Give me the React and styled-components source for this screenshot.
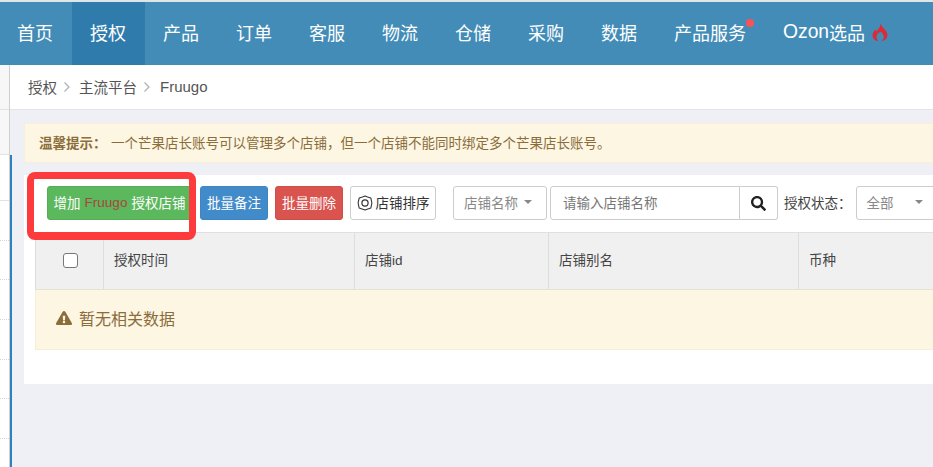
import React from "react";
import styled, { createGlobalStyle } from "styled-components";
import { FaExclamationTriangle, FaSearch } from "react-icons/fa";

const Global = createGlobalStyle`
  html, body { margin: 0; padding: 0; width: 933px; height: 467px; overflow: hidden; background: #eef0f5; }
  * { box-sizing: border-box; }
  body { font-family: "Liberation Sans", "Noto Sans CJK SC", sans-serif; color: #333; }
`;

const Page = styled.div`
  width: 933px; height: 467px; display: flex; flex-direction: column; overflow: hidden; position: relative;
`;
const TopStrip = styled.div`height: 2px; flex: none; background: #dfe6ea;`;
const Nav = styled.nav`
  height: 63px; flex: none; display: flex; background: #438cb8; margin-left: -1.5px;
`;
const NavItem = styled.div`
  position: relative; height: 100%; display: flex; align-items: center; flex: none;
  padding: 0 18.5px 3px; font-size: 18px; color: #fff; white-space: nowrap;
  background: ${p => (p.$active ? "#2f7cac" : "transparent")};
`;
const OzonWord = styled.span`font-size: 19.3px;`;
const Dot = styled.span`
  position: absolute; top: 17px; right: 11px; width: 8px; height: 8px; border-radius: 50%; background: #f9505a;
`;
const Fire = styled.svg`width: 16px; height: 18px; margin-left: 7px; flex: none;`;

const Body = styled.div`flex: 1; display: flex; min-height: 0;`;
const Sidebar = styled.aside`
  width: 10px; flex: none; background: #fff; border-right: 1px solid #cfcfcf; display: flex; flex-direction: column;
`;
const SideHead = styled.div`
  height: ${p => p.$h}px; flex: none; background: ${p => p.$bg || "#f7f7f7"}; border-bottom: 1px solid #e2e2e2;
`;
const SideRow = styled.div`height: 39.7px; flex: none; border-bottom: 1px dotted #d4d4d4;`;

const Main = styled.main`flex: 1; min-width: 0; display: flex; flex-direction: column;`;
const Crumbs = styled.div`
  height: 45px; flex: none; background: #fff; border-bottom: 1px solid #e3e4e6; display: flex; align-items: center;
  padding: 0 0 1px 18px; font-size: 14.5px; color: #555;
`;
const CrumbLatin = styled.span`font-size: 15px; margin-left: 1px;`;
const Sep = styled.svg`width: 8px; height: 12px; margin: 0 8px 0 6px; flex: none;`;

const Content = styled.div`flex: 1; position: relative; padding: 13px 0 0 14px; min-height: 0; overflow: hidden;`;
const BlueBar = styled.div`position: absolute; left: 0; top: 45px; bottom: 0; width: 2px; background: #2f80bf;`;

const Alert = styled.div`
  height: 40px; background: #fdf6e3; border: 1px solid #f8eedb; border-right: 0; display: flex; align-items: center;
  padding: 0 0 2px 14px; font-size: 13.5px; color: #8a6d3b; white-space: nowrap;
`;
const AlertTitle = styled.b`font-weight: 700; margin-right: 4.5px;`;

const Panel = styled.section`
  margin-top: 12px; height: 209px; background: #fff; padding: 11px 0 0 11px; width: 920px;
`;
const Toolbar = styled.div`
  height: 34px; display: flex; align-items: stretch; margin-left: 12px; white-space: nowrap; font-size: 13.5px;
`;
const Btn = styled.button`
  height: 34px; padding: 0 0 2px; width: ${p => p.$w}px; margin-left: ${p => p.$ml || 0}px; flex: none;
  background: ${p => p.$bg}; border: 1px solid ${p => p.$bd}; border-radius: 3px; color: ${p => p.$fg || "#fff"};
  font: inherit; display: flex; align-items: center; justify-content: center;
`;
const Brand = styled.span`color: #a94442; margin: 0 4px;`;
const SortIcon = styled.svg`width: 16px; height: 16px; margin: 2px 3px 0 0; flex: none;`;
const Select = styled.div`
  width: ${p => p.$w}px; height: 34px; margin-left: ${p => p.$ml}px; flex: none; border: 1px solid #ccc; border-radius: 3px;
  background: #fff; color: #888; display: flex; align-items: center; padding: 0 0 2px 10px;
`;
const Caret = styled.i`
  width: 0; height: 0; margin-left: ${p => p.$ml}px; border-left: 4px solid transparent; border-right: 4px solid transparent; border-top: 4px solid #888;
`;
const SearchInput = styled.div`
  width: 190px; height: 34px; margin-left: 3px; flex: none; border: 1px solid #ccc; border-radius: 3px 0 0 3px;
  color: #777; display: flex; align-items: center; padding: 0 0 2px 12px;
`;
const SearchBtn = styled.div`
  width: 38px; height: 34px; flex: none; border: 1px solid #ccc; border-left: 0; border-radius: 0 3px 3px 0;
  color: #222; display: flex; align-items: center; justify-content: center; font-size: 15px;
`;
const Label = styled.span`margin: 0 4px 2px 6px; flex: none; color: #444; align-self: center;`;

const Table = styled.div`margin-top: 12px; border-top: 1px solid #e0e0e0; width: 909px;`;
const HeadRow = styled.div`
  height: 57px; display: flex; background: #f0f0f0; border-left: 1px solid #ddd; border-bottom: 1px solid #e6e2d2;
`;
const Th = styled.div`
  width: ${p => p.$w}px; flex: none; border-right: 1px solid #ddd; display: flex; align-items: center; padding: 0 0 4px 10px;
  font-size: 13.5px; color: #444; justify-content: ${p => (p.$center ? "center" : "flex-start")};
  ${p => p.$center && "padding-left: 2px;"}
`;
const Check = styled.span`
  width: 15px; height: 15px; margin-top: 3px; border: 1px solid #777; border-radius: 3px; background: #fff;
`;
const Empty = styled.div`
  height: 60px; background: #fdf6e3; border: 1px solid #f7eed9; border-right: 0; border-top: 0; display: flex; align-items: center;
  padding: 0 0 3px 20px; font-size: 16px; color: #8a6d3b;
`;
const WarnIcon = styled(FaExclamationTriangle)`font-size: 16px; margin-right: 7px;`;

const Callout = styled.div`
  position: absolute; left: 27px; top: 172px; width: 169px; height: 68px; border: 7px solid #fd3a3c; border-bottom-width: 8px;
  border-radius: 8px; pointer-events: none;
`;

const navItems = ["首页", "授权", "产品", "订单", "客服", "物流", "仓储", "采购", "数据"];
const columns = [
  { w: 68, center: true, body: <Check /> },
  { w: 251, body: "授权时间" },
  { w: 194, body: "店铺id" },
  { w: 250, body: "店铺别名" },
  { w: 145, body: "币种" },
];

const Chevron = () => (
  <Sep viewBox="0 0 8 12"><path d="M1.5 1.5 6 6l-4.5 4.5" fill="none" stroke="#aab0b6" strokeWidth="1.2" /></Sep>
);

export default function App() {
  return (
    <Page>
      <Global />
      <TopStrip />
      <Nav>
        {navItems.map((t, i) => <NavItem key={t} $active={i === 1}>{t}</NavItem>)}
        <NavItem>产品服务<Dot /></NavItem>
        <NavItem>
          <OzonWord>Ozon</OzonWord>选品
          <Fire viewBox="0 0 16 18">
            <path
              fillRule="evenodd"
              fill="#dd2a35"
              d="M8.6 0C9 3 11 4.4 12.8 6.6 14.6 8.6 15.6 10.4 15.4 12.6 15.1 15.8 12.6 18 9.6 18L10.4 17C11.9 15.8 12.2 14 11.6 12.4 11 11 10 10 9.2 8.6 8.4 9.6 7.6 10 6.9 9.2 5.4 10.8 4.2 12.6 4.5 14.6 4.7 15.8 5.3 16.9 6.2 18 3 17.7.6 15.4.6 12.4.6 9.8 2 8 3.2 6.4L4.4 8.4C5.9 6.4 8.9 4 8.6 0Z"
            />
          </Fire>
        </NavItem>
      </Nav>
      <Body>
        <Sidebar>
          <SideHead $h={45} />
          <SideHead $h={45} />
          <SideHead $h={46} $bg="#fff" />
          {[0, 1, 2, 3, 4, 5].map(i => <SideRow key={i} />)}
        </Sidebar>
        <Main>
          <Crumbs>授权<Chevron />主流平台<Chevron /><CrumbLatin>Fruugo</CrumbLatin></Crumbs>
          <Content>
            <BlueBar />
            <Alert>
              <AlertTitle>温馨提示：</AlertTitle>
              一个芒果店长账号可以管理多个店铺，但一个店铺不能同时绑定多个芒果店长账号。
            </Alert>
            <Panel>
              <Toolbar>
                <Btn $w={145} $bg="#5cb85c" $bd="#55ae55">增加<Brand>Fruugo</Brand>授权店铺</Btn>
                <Btn $w={68} $ml={8} $bg="#428bca" $bd="#3f85c2">批量备注</Btn>
                <Btn $w={68} $ml={7} $bg="#d9534f" $bd="#d04c48">批量删除</Btn>
                <Btn $w={86} $ml={7} $bg="#fff" $bd="#ccc" $fg="#333">
                  <SortIcon viewBox="0 0 16 16">
                    <path d="M8 .9 10.6 1.9 13.8 2.9 14.9 8 13.8 13.1 8 15.1 2.2 13.1 1.1 8 2.2 2.9 5.4 1.9Z" fill="none" stroke="#333" strokeWidth="1.1" strokeLinejoin="round" />
                    <circle cx="8" cy="8" r="3.1" fill="none" stroke="#333" strokeWidth="1.2" />
                  </SortIcon>
                  店铺排序
                </Btn>
                <Select $w={94} $ml={17}>店铺名称<Caret $ml={6} /></Select>
                <SearchInput>请输入店铺名称</SearchInput>
                <SearchBtn><FaSearch /></SearchBtn>
                <Label>授权状态：</Label>
                <Select $w={110} $ml={0}>全部<Caret $ml={21} /></Select>
              </Toolbar>
              <Table>
                <HeadRow>
                  {columns.map((c, i) => <Th key={i} $w={c.w} $center={c.center}>{c.body}</Th>)}
                </HeadRow>
                <Empty><WarnIcon />暂无相关数据</Empty>
              </Table>
            </Panel>
          </Content>
        </Main>
      </Body>
      <Callout />
    </Page>
  );
}
